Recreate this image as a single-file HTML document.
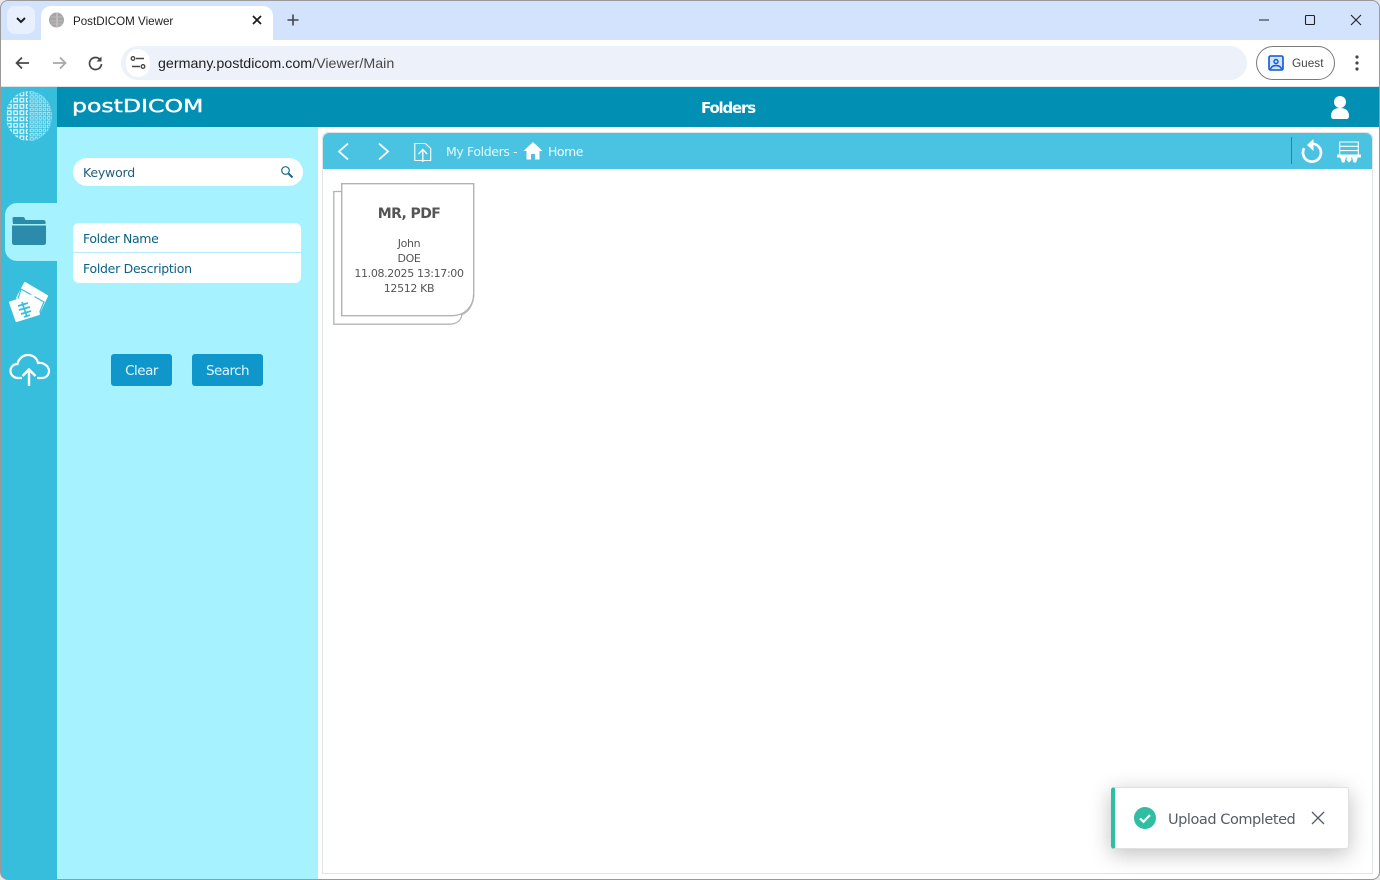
<!DOCTYPE html>
<html><head><meta charset="utf-8"><title>PostDICOM Viewer</title>
<style>
html,body{margin:0;padding:0;width:1380px;height:880px;overflow:hidden;background:#fff}
body{position:relative;font-family:"DejaVu Sans","Liberation Sans",sans-serif}
.a{position:absolute;white-space:nowrap}
.c{font-family:"Liberation Sans",sans-serif}
svg{position:absolute;overflow:visible}
</style></head><body>
<!-- browser chrome -->
<div class="a" style="left:0;top:0;width:1380px;height:40px;background:#d3e3fd"></div>
<div class="a" style="left:7px;top:6px;width:28px;height:28px;background:#e8effd;border-radius:8px"></div>
<svg style="left:0;top:0" width="60" height="40"><path d="M17 18l4 4 4-4" fill="none" stroke="#1f1f1f" stroke-width="2"/></svg>
<div class="a" style="left:41px;top:6px;width:232px;height:34px;background:#fff;border-radius:10px 10px 0 0"></div>
<svg style="left:49px;top:12px" width="16" height="16"><circle cx="7.500" cy="8" r="7.500" fill="#a5a5a5"/><path d="M8 1v14" stroke="#c9b5b5" stroke-width="2"/><path d="M2 5h12M1 9h13M2 12h11" stroke="#bdbdbd" stroke-width="1"/></svg>
<div class="a c" style="left:73px;top:14px;font-size:11.600px;line-height:15px;color:#1f1f1f">PostDICOM Viewer</div>
<svg style="left:250px;top:13px" width="14" height="14"><path d="M3 3l8 8M11 3l-8 8" stroke="#1f1f1f" stroke-width="1.800"/></svg>
<svg style="left:286px;top:13px" width="14" height="14"><path d="M7 1.500v11M1.500 7h11" stroke="#444" stroke-width="1.600"/></svg>
<svg style="left:1255px;top:10px" width="115" height="20"><path d="M4 10h10" stroke="#222"/><rect x="50.500" y="5.500" width="9" height="9" rx="1" fill="none" stroke="#222" stroke-width="1.100"/><path d="M96 5l10 10M106 5l-10 10" stroke="#222" stroke-width="1.100"/></svg>

<div class="a" style="left:0;top:40px;width:1380px;height:47px;background:#fff;border-bottom:1px solid #e0e3e8;box-sizing:border-box"></div>
<svg style="left:14px;top:54px" width="100" height="18"><path d="M15 9H3M8 3.500L2.500 9 8 14.500" fill="none" stroke="#474747" stroke-width="1.700"/><path d="M39 9h12M46 3.500L51.500 9 46 14.500" fill="none" stroke="#a8a8a8" stroke-width="1.700"/><path d="M86 5.500A6 6 0 1 0 87.500 10" fill="none" stroke="#474747" stroke-width="1.700"/><path d="M87.500 2.500v5h-5z" fill="#474747"/></svg>
<div class="a" style="left:121px;top:46px;width:1126px;height:34px;background:#ecf1fa;border-radius:17px"></div>
<div class="a" style="left:126px;top:49px;width:24px;height:28px;border-radius:14px;background:#fff"></div>
<svg style="left:130px;top:55px" width="16" height="16"><path d="M6 3.500h8M2 11.500h8" stroke="#444" stroke-width="1.400"/><circle cx="3" cy="3.500" r="1.800" fill="none" stroke="#444" stroke-width="1.300"/><circle cx="13" cy="11.500" r="1.800" fill="none" stroke="#444" stroke-width="1.300"/></svg>
<div class="a c" style="left:158px;top:56px;font-size:14.250px;line-height:17px;color:#1f1f1f">germany.postdicom.com<span style="color:#474747">/Viewer/Main</span></div>
<div class="a" style="left:1256px;top:46px;width:79px;height:34px;box-sizing:border-box;border:1px solid #7a7a7a;border-radius:17px;background:#fff"></div>
<svg style="left:1268px;top:55px" width="16" height="16"><rect x="1" y="1" width="14" height="14" rx="1.500" fill="#d3e3fd" stroke="#0b57d0" stroke-width="1.600"/><circle cx="8" cy="6.500" r="2" fill="none" stroke="#0b57d0" stroke-width="1.400"/><path d="M2.500 14c1-3 3-3.500 5.500-3.500s4.500.5 5.500 3.500" fill="none" stroke="#0b57d0" stroke-width="1.400"/></svg>
<div class="a c" style="left:1292px;top:56px;font-size:11.800px;line-height:15px;color:#474747">Guest</div>
<svg style="left:1350px;top:54px" width="14" height="18"><circle cx="7" cy="3" r="1.600" fill="#474747"/><circle cx="7" cy="9" r="1.600" fill="#474747"/><circle cx="7" cy="15" r="1.600" fill="#474747"/></svg>

<!-- app frame -->
<div class="a" style="left:1px;top:87px;width:56px;height:793px;background:#37bedd"></div>
<div class="a" style="left:57px;top:87px;width:1323px;height:40px;background:#018fb3"></div>
<div class="a" style="left:57px;top:127px;width:261px;height:753px;background:#a6f2ff"></div>

<!-- globe -->
<svg style="left:4px;top:90px" width="50" height="54">
<defs>
<pattern id="l" width="6.300" height="6.300" patternUnits="userSpaceOnUse" x="2.500" y="1"><rect x="1" y="1" width="3.600" height="3.600" fill="none" stroke="#fff" stroke-width="1.200"/></pattern>
<pattern id="r" width="4.200" height="4.200" patternUnits="userSpaceOnUse" x="1" y="1"><rect x=".5" y=".5" width="2.500" height="2.500" fill="none" stroke="#bfeaf5" stroke-width=".8"/></pattern>
<clipPath id="cl"><ellipse cx="25" cy="26" rx="23" ry="25"/></clipPath></defs>
<g clip-path="url(#cl)"><rect x="2" y="1" width="22" height="50" fill="url(#l)" opacity=".9"/><rect x="25" y="1" width="23" height="50" fill="url(#r)"/></g></svg>

<!-- logo -->
<div class="a" style="left:72px;top:95px;font-family:'DejaVu Sans',sans-serif;font-size:18px;line-height:24px;color:#fff;transform-origin:0 0;transform:scaleX(1.310);-webkit-text-stroke:.4px #fff">postDICOM</div>
<div class="a" style="left:701px;top:99px;font-family:'DejaVu Sans',sans-serif;font-weight:bold;font-size:15px;line-height:19px;color:#fff;letter-spacing:-1.200px">Folders</div>
<svg style="left:1330px;top:95px" width="20" height="25"><circle cx="10" cy="7" r="6" fill="#fff"/><path d="M1 21c0-6 4-8 9-8s9 2 9 8c0 2-1 3-3 3H4c-2 0-3-1-3-3z" fill="#fff"/></svg>

<!-- sidebar tabs -->
<div class="a" style="left:5px;top:203px;width:52px;height:58px;background:#a6f2ff;border-radius:12px 0 0 12px"></div>
<svg style="left:11px;top:216px" width="36" height="30"><path d="M1.500 2.500c0-1 .5-1.500 1.500-1.500h9c1 0 1.500.5 2 2l.5 1h18c1 0 2 .5 2 2v3H2z" fill="#2a8bab"/><path d="M1 9.500h34v17c0 1.500-1 2.500-2.500 2.500h-29C2 29 1 28 1 26.500z" fill="#2a8bab"/><path d="M1.500 8.500h33" stroke="#a6f2ff" stroke-width="1"/></svg>
<svg style="left:0;top:275px" width="57" height="50">
<path d="M25 8L47 21 40 36 17 23z" fill="#fff" stroke="#fff" stroke-width="2" stroke-linejoin="round"/>
<path d="M21 14L44 27 38 41 16 31z" fill="#fff" stroke="#37bedd" stroke-width="1.200"/>
<path d="M10 27.500L33 20 39 39 16.500 46z" fill="#fff" stroke="#fff" stroke-width="2" stroke-linejoin="round"/>
<path d="M22 27l5 15M18 31l10-3M19 35l11-3M21 39l10-3M24 42l6-2" stroke="#37bedd" stroke-width="1.700" fill="none"/></svg>
<svg style="left:9px;top:353px" width="42" height="34"><path d="M13 25H9c-4 0-7.500-3-7.500-7s3-7 7-7c1-5 5-9 10.500-9 5 0 9 3 10 8 5-1 11 3 11 8 0 4-3 7-7 7h-5" fill="none" stroke="#fff" stroke-width="2.200"/><path d="M20 33V17M13.500 23l6.500-6.500 6.500 6.500" fill="none" stroke="#fff" stroke-width="2.400"/></svg>

<!-- search panel -->
<div class="a" style="left:73px;top:158px;width:230px;height:28px;background:#fff;border-radius:14px"></div>
<div class="a" style="left:83px;top:165px;font-size:12.500px;line-height:16px;color:#205e80;letter-spacing:-.2px">Keyword</div>
<svg style="left:280px;top:165px" width="14" height="14"><circle cx="5.500" cy="5.500" r="3.800" fill="none" stroke="#1d6a8c" stroke-width="1.200"/><path d="M8.500 8.500l4 4" stroke="#1d6a8c" stroke-width="2"/></svg>
<div class="a" style="left:73px;top:223px;width:228px;height:60px;background:#fff;border-radius:6px"></div>
<div class="a" style="left:73px;top:252px;width:228px;height:1px;background:#b6e9fa"></div>
<div class="a" style="left:83px;top:231px;font-size:12.500px;line-height:16px;color:#0b6188;letter-spacing:-.37px">Folder Name</div>
<div class="a" style="left:83px;top:261px;font-size:12.500px;line-height:16px;color:#0b6188;letter-spacing:-.28px">Folder Description</div>
<div class="a" style="left:111px;top:354px;width:61px;height:32px;background:#0f96cb;border-radius:3px;color:#dff6ff;font-size:13.500px;line-height:34px;text-align:center;letter-spacing:-.5px">Clear</div>
<div class="a" style="left:192px;top:354px;width:71px;height:32px;background:#0f96cb;border-radius:3px;color:#dff6ff;font-size:13.500px;line-height:34px;text-align:center;letter-spacing:-.55px">Search</div>

<!-- main panel -->
<div class="a" style="left:322px;top:132px;width:1051px;height:742px;box-sizing:border-box;border:1px solid #dfe5e5;border-radius:6px 6px 0 0;background:#fff"></div>
<div class="a" style="left:323px;top:133px;width:1049px;height:36px;background:#49c3e1;border-radius:6px 6px 0 0"></div>
<svg style="left:335px;top:140px" width="60" height="24"><path d="M13 3.500L4 11.500l9 8" fill="none" stroke="#fff" stroke-width="1.800"/><path d="M44 3.500l9 8-9 8" fill="none" stroke="#fff" stroke-width="1.800"/></svg>
<svg style="left:414px;top:141px" width="18" height="24"><path d="M.8 2.500h10.500l5.400 5v12H.8z" fill="none" stroke="#fff" stroke-width="1.100"/><path d="M8.800 21V8.500M4.500 13l4.300-4.500 4.300 4.500" fill="none" stroke="#fff" stroke-width="1.300"/></svg>
<div class="a" style="left:446px;top:144px;font-size:12.500px;line-height:16px;color:#e6f9fd;letter-spacing:-.38px">My Folders -</div>
<svg style="left:523px;top:141px" width="20" height="20"><path d="M10 1L.5 10h3v8.500h4.500v-5.500h4v5.500h4.500V10h3z" fill="#fff"/></svg>
<div class="a" style="left:548px;top:144px;font-size:12.500px;line-height:16px;color:#f0fbfe;letter-spacing:-.5px">Home</div>
<div class="a" style="left:1291px;top:137px;width:1px;height:27px;background:#2288a8"></div>
<svg style="left:1300px;top:138px" width="24" height="26"><path d="M12 5.700A9 9 0 1 1 4.200 10.200" fill="none" stroke="#fff" stroke-width="2.700"/><path d="M13.500 1v12L7 7z" fill="#fff"/></svg>
<svg style="left:1337px;top:139px" width="24" height="26"><path d="M2.700 3h18.600v13H2.700zM2.700 7.300h18.600M2.700 11.600h18.600" fill="none" stroke="#fff" stroke-width="1.100"/><path d="M0 15.500h24v3H0z" fill="#fff"/><path d="M3 18h6l-1.500 5.500H5zM10 18h4l.5 3-2.500 2.500L9.500 21zM15 18h6l-2 5.500h-2.500z" fill="#fff"/></svg>

<!-- card -->
<svg style="left:333px;top:183px" width="143" height="143"><path d="M8 8.500H.8v132.700h115c7 0 12-3 13-9" fill="none" stroke="#b3b3b3" stroke-width="1.300"/><path d="M8.700.7H140.700v110c0 12-8 22-22 22H8.700z" fill="#fff" stroke="#b3b3b3" stroke-width="1.400"/><path d="M128 132c7-2 12-9 13-20" fill="none" stroke="#b3b3b3" stroke-width="1"/></svg>
<div class="a" style="left:341px;top:205px;width:136px;text-align:center;font-weight:bold;font-size:14px;line-height:18px;color:#555;letter-spacing:-.6px">MR, PDF</div>
<div class="a" style="left:341px;top:236px;width:136px;text-align:center;font-size:11px;line-height:15px;color:#555;letter-spacing:-.35px;white-space:normal">John<br>DOE<br>11.08.2025 13:17:00<br>12512 KB</div>

<!-- toast -->
<div class="a" style="left:1111px;top:787px;width:238px;height:62px;box-sizing:border-box;background:#fff;border:1px solid #e0e0e0;border-left:4px solid #30bea2;border-radius:3px;box-shadow:0 5px 22px rgba(0,0,0,.25)"></div>
<svg style="left:1134px;top:807px" width="22" height="22"><circle cx="11" cy="11" r="11" fill="#30bea2"/><path d="M6 11.500l3.500 3.300L16 8" fill="none" stroke="#fff" stroke-width="2.200"/></svg>
<div class="a" style="left:1168px;top:811px;font-size:14.500px;line-height:19px;color:#555c66;letter-spacing:-.45px">Upload Completed</div>
<svg style="left:1311px;top:811px" width="14" height="14"><path d="M1 1l12 12M13 1L1 13" stroke="#555c66" stroke-width="1.300"/></svg>

<!-- window frame -->
<svg style="left:0;top:0" width="1380" height="880"><path d="M0 0h1380v880H0z M8 .5A7.500 7.500 0 0 0 .5 8V872a7.500 7.500 0 0 0 7.500 7.500H1372a7.500 7.500 0 0 0 7.500-7.500V8a7.500 7.500 0 0 0-7.500-7.500z" fill="#e8e8e8" fill-rule="evenodd"/><rect x=".5" y=".5" width="1379" height="879" rx="7.500" fill="none" stroke="#9a9a9a"/></svg>
</body></html>
